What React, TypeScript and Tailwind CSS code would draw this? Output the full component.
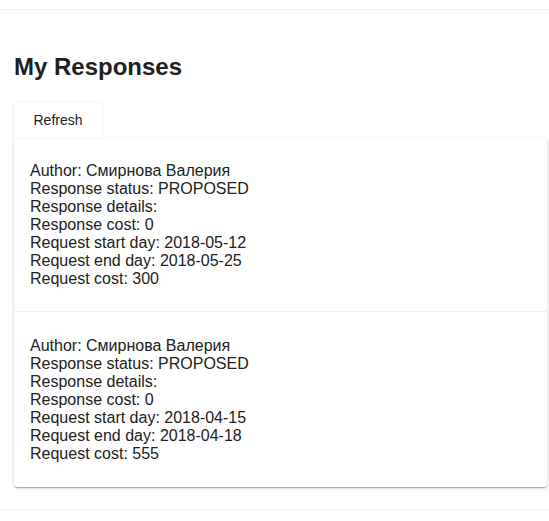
const responses = [
  {
    author: "Смирнова Валерия",
    status: "PROPOSED",
    details: "",
    cost: 0,
    start: "2018-05-12",
    end: "2018-05-25",
    requestCost: 300,
  },
  {
    author: "Смирнова Валерия",
    status: "PROPOSED",
    details: "",
    cost: 0,
    start: "2018-04-15",
    end: "2018-04-18",
    requestCost: 555,
  },
];

export default function App() {
  return (
    <div className="min-h-[521px] bg-white font-['Liberation_Sans',Arial,sans-serif] text-[#212121]">
      <div className="h-[10px] border-b border-[#f0f0f0]" />
      <main className="px-[14px] pb-[22px]">
        <h2 className="mt-[43px] text-[24px] font-bold leading-[28px]">My Responses</h2>
        <div className="mt-[21px] flex">
          <button
            className="h-[36px] w-[88px] rounded-t-[3px] bg-white text-[14px] text-[#212121] shadow-[0_0_2px_rgba(0,0,0,0.15)]"
            type="button"
          >
            Refresh
          </button>
        </div>
        <div className="w-[533px] rounded-b-[3px] bg-white shadow-[0_1px_3px_rgba(0,0,0,0.2),0_1px_1px_rgba(0,0,0,0.14),0_2px_1px_-1px_rgba(0,0,0,0.12)]">
          {responses.map((response, index) => (
            <div
              className={`px-4 text-[16px] leading-[18px] ${
                index > 0 ? "border-t border-[#f0f0f0] pt-[25px] pb-6" : "pt-6 pb-[23px]"
              }`}
              key={index}
            >
              <p>Author: {response.author}</p>
              <p>Response status: {response.status}</p>
              <p>Response details: {response.details}</p>
              <p>Response cost: {response.cost}</p>
              <p>Request start day: {response.start}</p>
              <p>Request end day: {response.end}</p>
              <p>Request cost: {response.requestCost}</p>
            </div>
          ))}
        </div>
      </main>
      <div className="border-t border-[#f0f0f0]" />
    </div>
  );
}
